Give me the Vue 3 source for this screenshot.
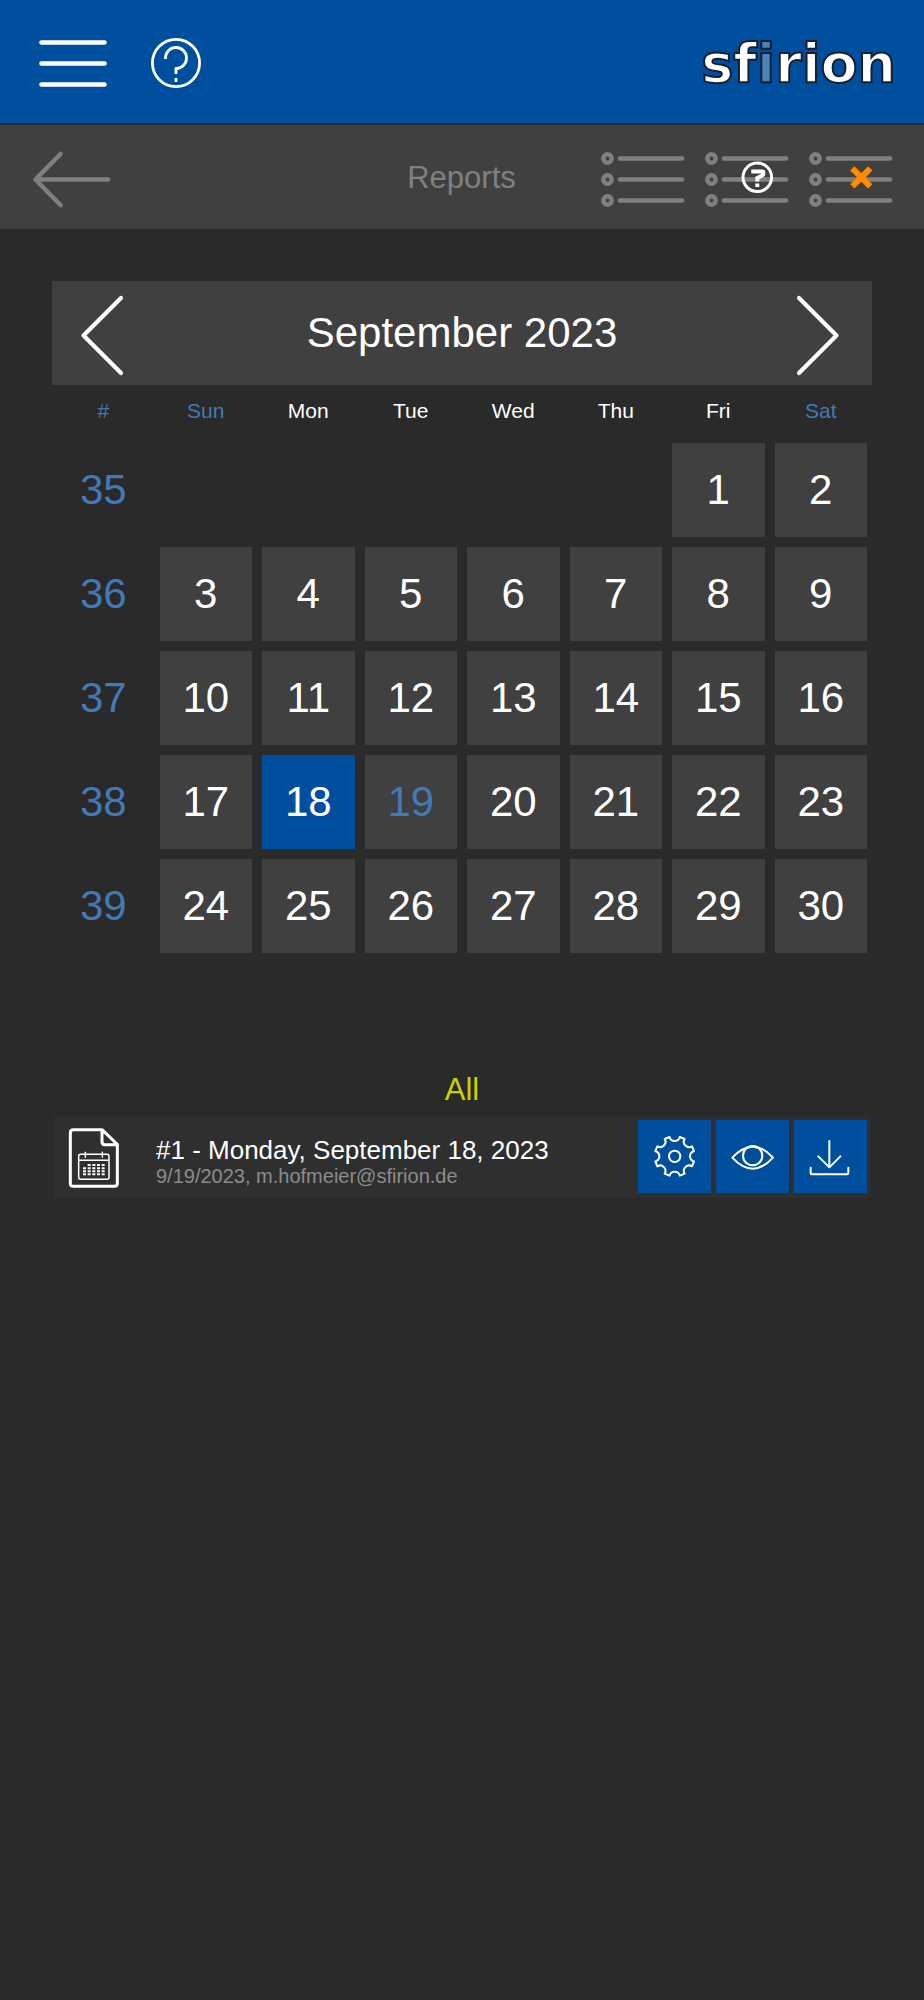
<script setup>
import { ref } from 'vue'

const weekdays = ['Sun', 'Mon', 'Tue', 'Wed', 'Thu', 'Fri', 'Sat']
const today = 19
const selected = ref(18)
const firstOffset = 5
const daysInMonth = 30
const firstWeek = 35

const weeks = Array.from({ length: 5 }, (_, w) => ({
  number: firstWeek + w,
  days: Array.from({ length: 7 }, (_, d) => {
    const day = w * 7 + d - firstOffset + 1
    return day >= 1 && day <= daysInMonth ? day : null
  })
}))

const listModes = [
  { id: 'list', label: 'List' },
  { id: 'help', label: 'List help' },
  { id: 'clear', label: 'Clear list' }
]
</script>

<template>
  <div class="page">
    <header class="topbar">
      <button class="tool" type="button" aria-label="Menu">
        <svg viewBox="0 0 104 104" class="line white">
          <path stroke-width="4.6" d="M21.5 32.5H84.5M21.5 53.5H84.5M21.5 74.5H84.5" />
        </svg>
      </button>
      <button class="tool" type="button" aria-label="Help">
        <svg viewBox="0 0 104 104" class="line white help">
          <circle cx="52" cy="53" r="23.6" />
          <path stroke-linecap="butt" d="M41.500 49V47.500A10.500 10.500 0 1 1 52 58.500V64M52 68V72" />
        </svg>
      </button>
      <div class="logo">sf<span>i</span>rion</div>
    </header>

    <nav class="toolbar">
      <button class="tool" type="button" aria-label="Back">
        <svg viewBox="0 0 104 104" class="line gray">
          <path stroke-width="4.6" d="M40.500 29L15.500 54.500L40.500 80M15.500 54.500H88" />
        </svg>
      </button>
      <h1 class="title">Reports</h1>
      <div class="modes">
        <button v-for="m in listModes" :key="m.id" class="tool" type="button" :aria-label="m.label">
          <svg viewBox="0 0 104 104">
            <g class="line gray">
              <g v-for="y in [33.5, 54.5, 75.5]" :key="y">
                <circle cx="16.500" :cy="y" r="4.200" stroke-width="4.4" />
                <path stroke-width="4.6" :d="`M29 ${y}H91`" />
              </g>
            </g>
            <g v-if="m.id === 'help'" class="mark">
              <circle cx="62.300" cy="52.300" r="14.300" />
              <path d="M56.300 46.500H67.300Q68.300 46.500 68.300 47.500V49Q68.300 50 67.300 50.500L62.300 53V56.500" />
              <path d="M62.300 58.500V62" />
            </g>
            <path v-if="m.id === 'clear'" class="cross" d="M53.300 43.300L71.300 61.300M71.300 43.300L53.300 61.300" />
          </svg>
        </button>
      </div>
    </nav>

    <main class="content">
      <section class="calendar" aria-label="Calendar">
        <div class="month">
          <button class="tool" type="button" aria-label="Previous month">
            <svg viewBox="0 0 104 104" class="line white">
              <path stroke-width="4.2" d="M69 17L31.500 54.500L69 92" />
            </svg>
          </button>
          <h2>September 2023</h2>
          <button class="tool" type="button" aria-label="Next month">
            <svg viewBox="0 0 104 104" class="line white">
              <path stroke-width="4.2" d="M31 17L68.500 54.500L31 92" />
            </svg>
          </button>
        </div>
        <table>
          <thead>
            <tr>
              <th class="accent" scope="col">#</th>
              <th v-for="(d, i) in weekdays" :key="d" scope="col" :class="{ accent: i === 0 || i === 6 }">{{ d }}</th>
            </tr>
          </thead>
          <tbody>
            <tr v-for="w in weeks" :key="w.number">
              <th class="accent" scope="row">{{ w.number }}</th>
              <td v-for="(day, i) in w.days" :key="i">
                <button
                  v-if="day"
                  type="button"
                  class="day"
                  :class="{ today: day === today, selected: day === selected }"
                  @click="selected = day"
                >{{ day }}</button>
              </td>
            </tr>
          </tbody>
        </table>
      </section>

      <section class="reports">
        <h3>All</h3>
        <article class="report">
          <svg class="doc" viewBox="42 168 306 246">
            <g fill="none" stroke="#fff" stroke-linejoin="round">
              <path stroke-width="9" d="M186 209H100Q91 209 91 218V370Q91 379 100 379H223Q232 379 232 370V253ZM186 209V246Q186 254 194 254H232" />
              <rect x="116" y="283" width="91" height="75" rx="6" stroke-width="4.5" />
              <path stroke-width="4.5" d="M116 301H207M136 275V293M187 275V293" />
              <path stroke-width="6" stroke-dasharray="9 5" d="M143 315H195M129 325H195M129 334H195M129 343H195" />
            </g>
          </svg>
          <div class="info">
            <p class="name">#1 - Monday, September 18, 2023</p>
            <p class="meta">9/19/2023, m.hofmeier@sfirion.de</p>
          </div>
          <div class="actions">
            <button type="button" aria-label="Settings">
              <svg viewBox="52 59 219 219" class="line white thin">
                <g transform="translate(162 168)">
                  <path d="M15.500 -58L30 -52A16 16 0 0 0 52 -30L58 -15.500A16 16 0 0 0 58 15.500L52 30A16 16 0 0 0 30 52L15.500 58A16 16 0 0 0 -15.500 58L-30 52A16 16 0 0 0 -52 30L-58 15.500A16 16 0 0 0 -58 -15.500L-52 -30A16 16 0 0 0 -30 -52L-15.500 -58A16 16 0 0 0 15.500 -58Z" />
                  <circle r="17" />
                </g>
              </svg>
            </button>
            <button type="button" aria-label="View">
              <svg viewBox="286 59 219 219" class="line white thin">
                <path d="M335 172Q365 139 396 139T457 172Q427 205 396 205T335 172Z" />
                <circle cx="396" cy="166" r="29" />
              </svg>
            </button>
            <button type="button" aria-label="Download">
              <svg viewBox="521 59 219 219" class="line white thin">
                <path d="M627 122V201M594 168L627 201L660 168M571 202V218Q571 222 575 222H680Q684 222 684 218V202" />
              </svg>
            </button>
          </div>
        </article>
      </section>
    </main>
  </div>
</template>

<style>
body {
  background: #2a2a2a;
}
</style>

<style scoped>
.page {
  min-height: 100vh;
  background: #2a2a2a;
  color: #fff;
  font-family: "Liberation Sans", Arial, sans-serif;
}
button {
  display: block;
  padding: 0;
  border: 0;
  background: none;
  color: inherit;
  font: inherit;
  cursor: pointer;
}
h1, h2, h3, p {
  margin: 0;
  font-weight: 400;
}
svg {
  display: block;
}
.tool {
  width: 104px;
  height: 104px;
  flex: none;
}
.line {
  fill: none;
  stroke-linecap: round;
  stroke-linejoin: round;
}
.white {
  stroke: #fff;
}
.gray {
  stroke: #808080;
}
.help {
  stroke-width: 2.8;
}
.thin {
  stroke-width: 6;
}
.topbar {
  display: flex;
  align-items: center;
  box-sizing: border-box;
  height: 125px;
  padding: 0 28px 0 20px;
  background: #004f9f;
  border-bottom: 2px solid #2a2a2a;
}
.logo {
  margin-left: auto;
  padding-top: 4px;
  font-family: "DejaVu Sans", Verdana, sans-serif;
  font-size: 54px;
  font-weight: 700;
  font-variant-ligatures: none;
  line-height: 64px;
  -webkit-text-stroke: 2px #14202c;
}
.logo span {
  color: #4a82be;
}
.toolbar {
  display: grid;
  grid-template-columns: 1fr auto 1fr;
  align-items: center;
  height: 104px;
  padding: 0 21px 0 20px;
  background: #404040;
}
.title {
  padding-top: 2px;
  color: #808080;
  font-size: 31px;
  line-height: 36px;
}
.modes {
  display: flex;
  justify-self: end;
}
.mark {
  fill: none;
  stroke: #fff;
  stroke-width: 3;
}
.mark path {
  stroke-width: 4;
}
.cross {
  stroke: #ff8c00;
  stroke-width: 6;
}
.content {
  padding: 52px;
}
.month {
  display: flex;
  align-items: center;
  justify-content: space-between;
  background: #404040;
}
.month h2 {
  font-size: 42px;
  line-height: 48px;
}
table {
  width: 100%;
  table-layout: fixed;
  border-spacing: 0;
  border-collapse: separate;
}
th {
  padding: 0;
  font-weight: 400;
  text-align: center;
}
thead th {
  height: 51px;
  padding-bottom: 2px;
  font-size: 21px;
}
tbody th {
  font-size: 42px;
}
.accent {
  color: #427ab5;
}
td {
  height: 94px;
  padding: 5px;
}
.day {
  width: 100%;
  height: 94px;
  background: #404040;
  font-size: 42px;
}
.today {
  color: #427ab5;
}
.selected {
  background: #004f9f;
  color: #fff;
}
.reports {
  margin: 106px 2px 0;
}
.reports h3 {
  color: #c8d400;
  font-size: 31px;
  line-height: 52px;
  text-align: center;
}
.report {
  display: flex;
  align-items: center;
  height: 82px;
  padding-right: 3px;
  background: #2f2f2f;
}
.doc {
  width: 102px;
  height: 82px;
  flex: none;
}
.info {
  flex: 1;
  padding-top: 10px;
}
.name {
  font-size: 26px;
  line-height: 28px;
}
.meta {
  color: #8c8c8c;
  font-size: 20px;
  line-height: 24px;
}
.actions {
  display: flex;
  gap: 5px;
  padding-bottom: 1px;
}
.actions button {
  width: 73px;
  height: 73px;
  background: #004f9f;
}
</style>
